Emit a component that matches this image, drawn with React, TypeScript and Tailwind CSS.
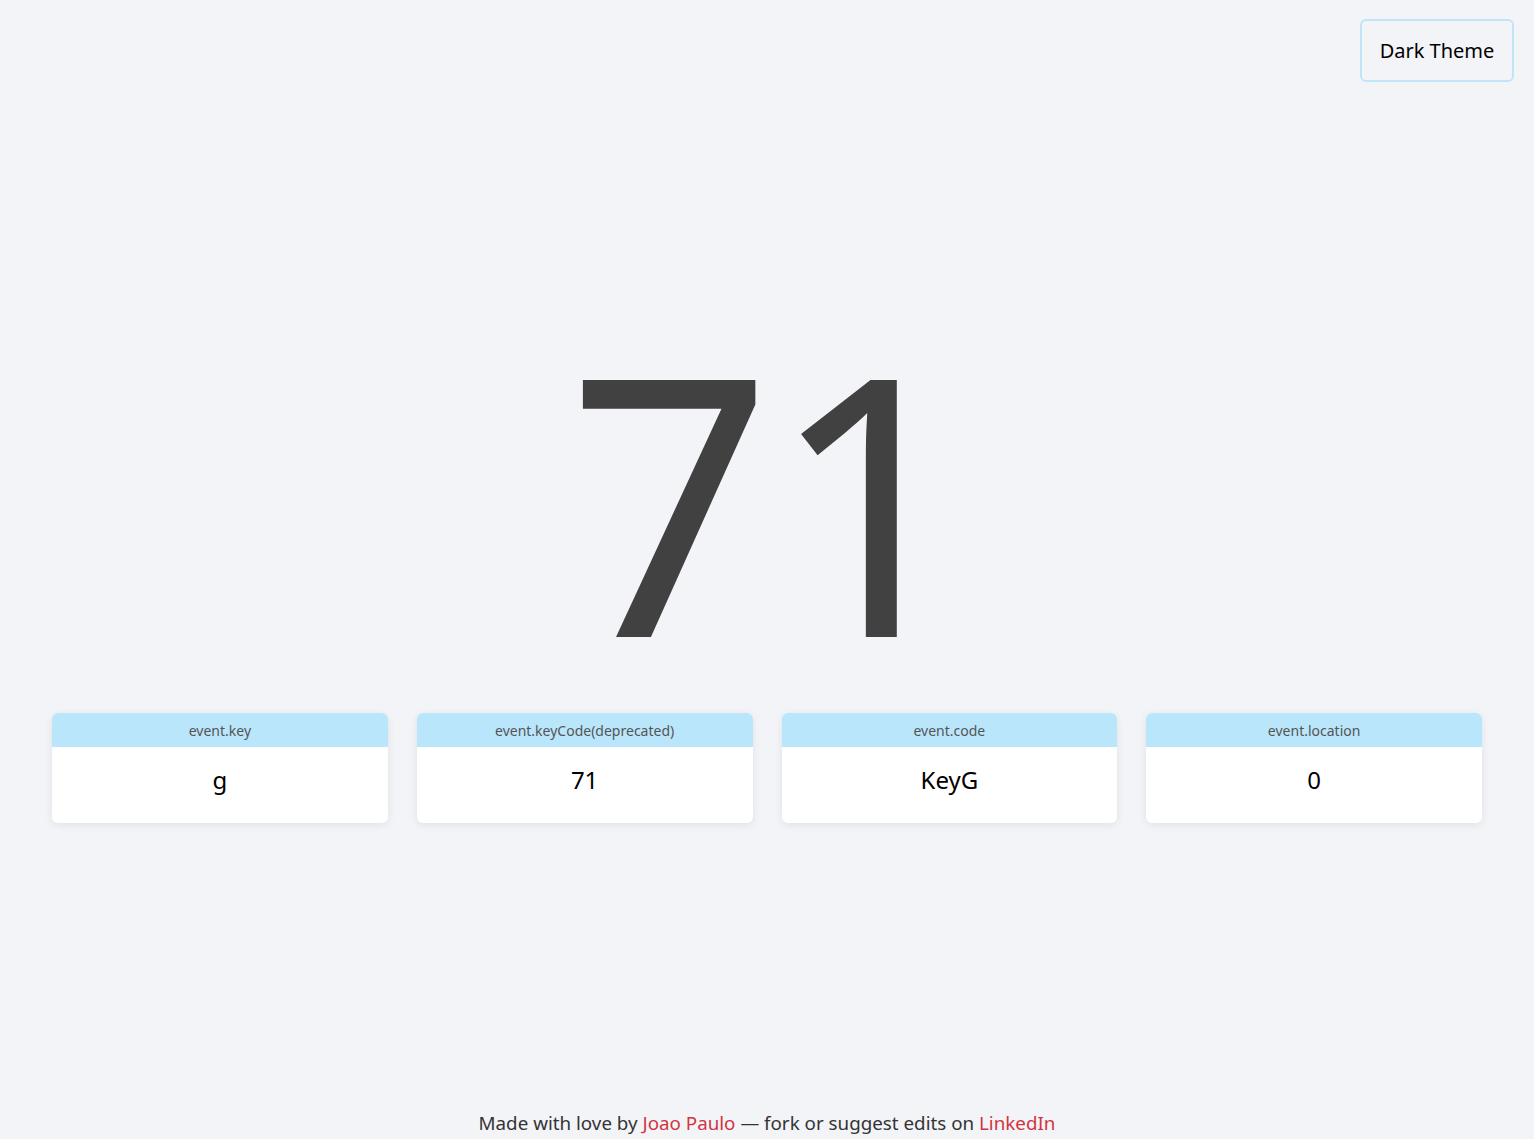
import React from 'react';

const fields = [
  { label: 'event.key', value: 'g' },
  { label: 'event.keyCode(deprecated)', value: '71' },
  { label: 'event.code', value: 'KeyG' },
  { label: 'event.location', value: '0' },
];

export default function App() {
  return (
    <div
      className="min-h-screen h-[1139px] bg-[#f3f4f8] flex flex-col overflow-hidden"
      style={{ fontFamily: '"Noto Sans", "Open Sans", sans-serif' }}
    >
      <div className="flex justify-end pt-[19px] pr-[20px]">
        <button className="w-[154px] h-[63px] rounded-md border-2 border-[#bfe6f8] text-[20px] text-black">
          Dark Theme
        </button>
      </div>

      <div className="flex justify-center mt-[235px] h-[396px]">
        <div className="text-[360px] leading-none text-[#414141] tracking-[-4px] ml-[4px]">71</div>
      </div>

      <div className="grid grid-cols-4 gap-[29px] px-[52px]">
        {fields.map((f) => (
          <div key={f.label} className="bg-white rounded-md overflow-hidden shadow-[0_2px_8px_rgba(0,0,0,0.08)]">
            <div className="h-[34px] bg-[#b9e6fb] flex items-center justify-center text-[14px] text-[#555]">
              {f.label}
            </div>
            <div className="h-[76px] flex items-center justify-center text-[24px] text-black pb-[10px]">
              {f.value}
            </div>
          </div>
        ))}
      </div>

      <div className="mt-auto pb-[2px] text-center text-[18.8px] text-[#333]">
        Made with love by <a className="text-[#d2353f]">Joao Paulo</a> — fork or suggest edits on{' '}
        <a className="text-[#d2353f]">LinkedIn</a>
      </div>
    </div>
  );
}
